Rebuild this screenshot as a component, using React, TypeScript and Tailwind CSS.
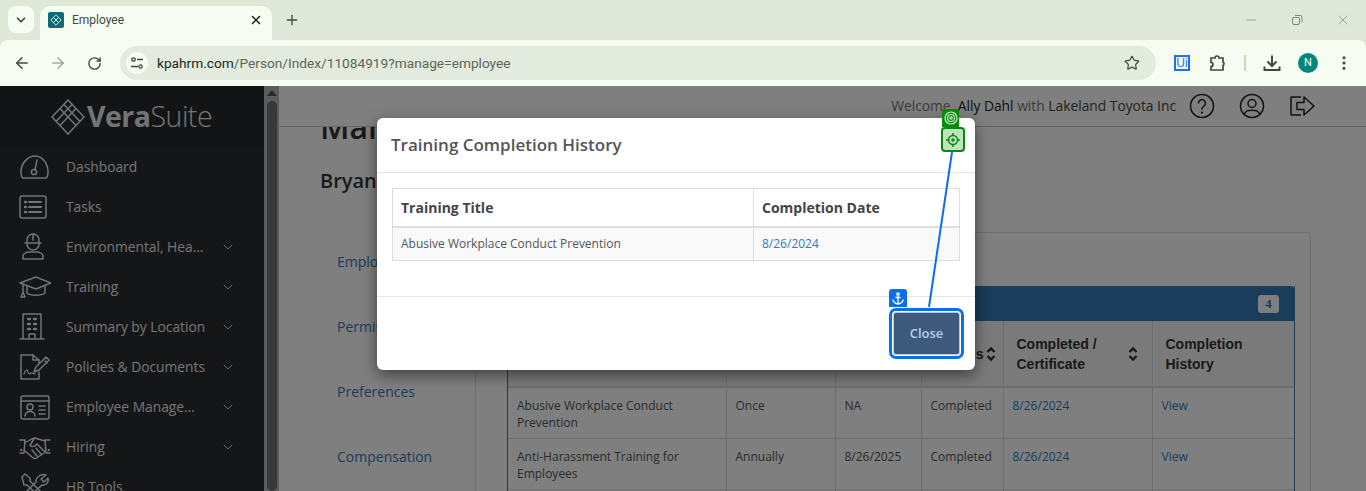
import { ArrowLeft, ArrowRight, ChevronDown, EllipsisVertical, Minus, Plus, RotateCw, Star, X } from "lucide-react";

const openSans = "font-['Open_Sans',sans-serif]";

const Icon = ({ children, dx = 0 }: { children: React.ReactNode; dx?: number }) => (
    <svg width={32} height={30} viewBox="0 0 32 30" fill="none" stroke="currentColor" strokeWidth="1.500" strokeLinecap="round" strokeLinejoin="round">
        <g transform={`translate(${dx} 0)`}>{children}</g>
    </svg>
);

const menu: { name: string; chevron?: boolean; icon: React.ReactNode }[] = [
    {
        name: "Dashboard",
        icon: (
            <Icon>
                <path d="M4 26h23c2-1 2-4 2-6C29 11 23 4 16 4S2 11 2 20c0 2 0 5 2 6z" />
                <circle cx="15" cy="20" r="2.600" />
                <path d="M16 17.500L18 8" />
            </Icon>
        ),
    },
    {
        name: "Tasks",
        icon: (
            <Icon dx={-2}>
                <rect x="3" y="4" width="26" height="22" rx="2" />
                <path d="M12 10h12M12 15h12M12 20h12" strokeWidth="2" />
                <path d="M8 10h1M8 15h1M8 20h1" strokeWidth="2.400" />
            </Icon>
        ),
    },
    {
        name: "Environmental, Health & Safety",
        chevron: true,
        icon: (
            <Icon dx={-2}>
                <path d="M10 11V8a6 6 0 0 1 12 0v3M8 11h16M16 2v6" />
                <path d="M10 12a6 6 0 0 0 12 0" />
                <path d="M6 27v-3c0-2 3-4 6-4h8c3 0 6 2 6 4v3z" />
            </Icon>
        ),
    },
    {
        name: "Training",
        chevron: true,
        icon: (
            <Icon>
                <path d="M1 11L17 5l15 6-15 6z" />
                <path d="M8 14v7c3 3 15 3 18 0v-7" />
                <path d="M4 12v8M2 25l2-5 2 5z" />
            </Icon>
        ),
    },
    {
        name: "Summary by Location",
        chevron: true,
        icon: (
            <Icon dx={-3}>
                <path d="M7 27V2h18v25M4 27h24M13 27v-5h6v5" />
                <path d="M12 7h2M18 7h2M12 12h2M18 12h2M12 17h2M18 17h2" strokeWidth="2.400" />
            </Icon>
        ),
    },
    {
        name: "Policies & Documents",
        chevron: true,
        icon: (
            <Icon>
                <path d="M20 20v7H2V3h12l6 5v3" />
                <path d="M14 3v5h6" />
                <path d="M5 22c2-5 3-5 4-2s2 2 3 1 2 1 4 1" strokeWidth="1.200" />
                <path d="M15 20l2-5L27 5l3 3-10 10zM26 9l2 2" />
            </Icon>
        ),
    },
    {
        name: "Employee Management",
        chevron: true,
        icon: (
            <Icon>
                <rect x="2" y="4" width="28" height="23" rx="2" />
                <path d="M2 9h28" />
                <circle cx="11" cy="15" r="3" />
                <path d="M6 24c0-6 10-6 10 0M20 14h6M20 18h6M20 22h6" />
            </Icon>
        ),
    },
    {
        name: "Hiring",
        chevron: true,
        icon: (
            <Icon>
                <path d="M1 8h5l-1 13H1M31 8h-5l1 13h4" />
                <path d="M2 18h.5M30 18h-.5" strokeWidth="2" />
                <path d="M6 10c4 0 6-4 10-4l10 3M15 7l-4 6c2 3 5 1 7-1l8 8" />
                <path d="M6 19l7 6c2 2 4 2 6 0l6-4M13 18l5 6M17 16l5 6" />
            </Icon>
        ),
    },
    {
        name: "HR Tools",
        icon: (
            <Icon>
                <path d="M3 5l3-3 5 4v3l13 13 4 4-3 3-17-16H5zM27 3l-5 4 3 3 4-4c1 4-2 8-6 7L12 23a3 3 0 1 1-4-4l9-9c-1-4 5-9 10-7z" />
            </Icon>
        ),
    },
];

const rows = [
    { title: "Abusive Workplace Conduct Prevention", freq: "Once", due: "NA", status: "Completed", date: "8/26/2024", link: "View" },
    { title: "Anti-Harassment Training for Employees", freq: "Annually", due: "8/26/2025", status: "Completed", date: "8/26/2024", link: "View" },
    { title: "", freq: "", due: "", status: "", date: "", link: "" },
];

const SortIcon = () => (
    <svg width="10" height="16" viewBox="0 0 10 16" fill="none" stroke="#333" strokeWidth="2.400" className="shrink-0">
        <path d="M1.500 6l3.500-3.500L8.500 6M1.500 10L5 13.500 8.500 10" />
    </svg>
);

function Chrome() {
    return (
        <div className="bg-[#dfe8d9] text-[#3f4a3c] font-['Roboto',sans-serif]">
            <div className="flex h-10 items-end pl-[8px]">
                <div className="mb-[7px] flex h-[27px] w-[26px] items-center justify-center rounded-[8px] bg-[#f7fcf3]">
                    <ChevronDown size={14} strokeWidth={3} />
                </div>
                <div className="ml-[6px] flex h-[34px] w-[232px] items-center rounded-t-[10px] bg-[#f7fcf3] pb-[6px] pl-[8px] pr-[9px]">
                    <div className="flex h-4 w-4 items-center justify-center rounded-[2px] bg-[#0f6b73]">
                        <svg width="12" height="12" viewBox="0 0 12 12" fill="none" stroke="#cfe8e8" strokeWidth="1">
                            <path d="M6 .8L11.200 6 6 11.200.8 6zM3.400 3.400l5.200 5.200M8.600 3.400L3.400 8.600" />
                        </svg>
                    </div>
                    <span className="ml-2 text-[12px]">Employee</span>
                    <X size={14} strokeWidth={2.600} className="ml-auto text-[#20261e]" />
                </div>
                <Plus size={16} strokeWidth={2} className="mb-[12px] ml-[12px]" />
                <div className="mb-[12px] ml-auto flex items-center gap-[30px] pr-[15px] text-[#7d867a]">
                    <Minus size={16} strokeWidth={1} />
                    <svg width="16" height="16" viewBox="0 0 16 16" fill="none" stroke="currentColor" strokeWidth="1">
                        <rect x="3.500" y="5.500" width="7" height="7" rx="1.500" />
                        <path d="M6 3.500h5.500a1.500 1.500 0 0 1 1.500 1.500v5.500" />
                    </svg>
                    <X size={16} strokeWidth={1} />
                </div>
            </div>
            <div className="flex h-[46px] items-center rounded-t-[8px] bg-[#f7fcf3] pl-[13px]">
                <ArrowLeft size={18} strokeWidth={2} />
                <ArrowRight size={18} strokeWidth={2} className="ml-[18px] text-[#a3a9a0]" />
                <RotateCw size={15} strokeWidth={2.200} className="ml-[20px]" />
                <div className="ml-[18px] flex h-[34px] w-[1036px] items-center rounded-full bg-[#e3ebde] pl-[6px] pr-[16px]">
                    <div className="flex h-[22px] w-[22px] items-center justify-center rounded-full bg-[#f7fcf3]">
                        <svg width="14" height="14" viewBox="0 0 14 14" fill="none" stroke="currentColor" strokeWidth="1.300">
                            <circle cx="3.500" cy="3.500" r="1.700" />
                            <circle cx="10.500" cy="10.500" r="1.700" />
                            <path d="M7 3.500h6M1 10.500h7" />
                        </svg>
                    </div>
                    <span className="ml-[9px] text-[13.700px] text-[#5d6659]">
                        <span className="text-[#20261e]">kpahrm.com</span>/Person/Index/11084919?manage=employee
                    </span>
                    <Star size={16} strokeWidth={1.800} className="ml-auto" />
                </div>
                <div className="ml-[18px] flex h-4 w-4 items-center justify-center border-2 border-[#1a73e8] font-['Liberation_Sans',sans-serif] text-[12px] leading-none text-[#1a73e8]">
                    Ui
                </div>
                <svg width="18" height="18" viewBox="0 0 18 18" fill="none" stroke="currentColor" strokeWidth="1.700" className="ml-[19px]">
                    <path d="M2 4h4a2 2 0 0 1 4 0h4v4a2 2 0 0 1 0 3.500V16H2v-3.500a2 2 0 0 0 0-4z" />
                </svg>
                <div className="ml-[17px] h-4 w-[2px] bg-[#b7e6a9]" />
                <svg width="18" height="18" viewBox="0 0 18 18" fill="none" stroke="currentColor" strokeWidth="2" className="ml-[17px]">
                    <path d="M9 1.500v10M4.500 7.500L9 12l4.500-4.500M1.500 12.500v3.500h15v-3.500" />
                </svg>
                <div className="ml-[17px] flex h-5 w-5 items-center justify-center rounded-full bg-[#00897b] text-[11px] text-white">N</div>
                <EllipsisVertical size={18} strokeWidth={2.200} className="ml-[17px]" />
            </div>
        </div>
    );
}

function Sidebar() {
    return (
        <aside className="flex h-full w-[264px] shrink-0 flex-col overflow-hidden bg-[#2b2d31] text-[#e8e8e8]">
            <div className="flex h-[61px] shrink-0 items-center bg-[#26282b] pl-[51px]">
                <svg width="34" height="36" viewBox="0 0 34 36" fill="none" stroke="currentColor" strokeWidth="1.500">
                    <path d="M17 1l16 17-16 17L1 18zM9 9.500l16 17M13 5.500l16 17M25 9.500l-16 17M21 5.500l-16 17" />
                </svg>
                <span className="ml-[2px] text-[28.500px] leading-none tracking-[-0.5px] font-['Open_Sans',sans-serif]">
                    <span className="font-bold">Vera</span>
                    <span className="font-light">Suite</span>
                </span>
            </div>
            {menu.map((item) => (
                <div key={item.name} className="flex h-10 shrink-0 items-center pl-[19px]">
                    <div className="w-[47px] shrink-0">{item.icon}</div>
                    <span className={`w-[140px] truncate text-[13.800px] ${openSans}`}>{item.name}</span>
                    {item.chevron && <ChevronDown size={16} strokeWidth={1.300} className="ml-[14px]" />}
                </div>
            ))}
        </aside>
    );
}

function Scrollbar() {
    return (
        <div className="flex h-full w-[15px] shrink-0 flex-col items-center bg-[#b8b8b8]">
            <div className="mt-[4px] h-0 w-0 border-x-[5px] border-b-[6px] border-x-transparent border-b-[#555]" />
            <div className="mt-[5px] h-full w-[10px] rounded-full bg-[#707070]" />
        </div>
    );
}

function TrainingTable() {
    return (
        <div className="ml-[31px] mr-[15px] mt-[53px] border border-t-0 border-[#337ab7]">
            <div className="flex h-[35px] items-center justify-end rounded-t-[3px] bg-[#337ab7] pr-[15px]">
                <span className="flex h-[18px] w-[21px] items-center justify-center rounded-[3px] bg-white font-['Liberation_Serif',serif] text-[13px] font-bold text-[#337ab7]">4</span>
            </div>
            <table className="w-full table-fixed border-collapse text-[12px] text-[#555]">
                <colgroup>
                    <col className="w-[218px]" />
                    <col className="w-[109px]" />
                    <col className="w-[86px]" />
                    <col className="w-[82px]" />
                    <col className="w-[149px]" />
                    <col />
                </colgroup>
                <thead>
                    <tr className="h-[66px] border-b-2 border-[#ddd] bg-[#f5f5f5] text-left font-['Liberation_Sans',sans-serif] text-[14px] font-bold leading-[20px] text-[#333]">
                        <th className="border-r border-[#ddd] px-[13px]">Training</th>
                        <th className="border-r border-[#ddd] px-[13px]">Frequency</th>
                        <th className="border-r border-[#ddd] px-[13px]">Due</th>
                        <th className="border-r border-[#ddd] pr-[7px] text-right">
                            <div className="flex items-center justify-end gap-[2px]">Status<SortIcon /></div>
                        </th>
                        <th className="border-r border-[#ddd] pl-[13px] pr-[14px]">
                            <div className="flex items-center justify-between">
                                <span>Completed /<br />Certificate</span>
                                <SortIcon />
                            </div>
                        </th>
                        <th className="px-[13px]">Completion<br />History</th>
                    </tr>
                </thead>
                <tbody className="leading-[17px]">
                    {rows.map((row, i) => (
                        <tr key={i} className="h-[51px] border-b border-[#ddd] align-top">
                            <td className="border-r border-[#ddd] px-[9px] pt-[9px]">{row.title}</td>
                            <td className="border-r border-[#ddd] px-[9px] pt-[9px]">{row.freq}</td>
                            <td className="border-r border-[#ddd] px-[9px] pt-[9px]">{row.due}</td>
                            <td className="border-r border-[#ddd] px-[9px] pt-[9px]">{row.status}</td>
                            <td className="border-r border-[#ddd] px-[9px] pt-[9px] text-[#337ab7]">{row.date}</td>
                            <td className="px-[9px] pt-[9px] text-[#337ab7]">{row.link}</td>
                        </tr>
                    ))}
                </tbody>
            </table>
        </div>
    );
}

function Main() {
    return (
        <main className={`flex h-full min-w-0 flex-1 flex-col bg-white ${openSans}`}>
            <header className="z-10 flex h-[41px] shrink-0 items-center justify-end border-b border-[#ccc] bg-white pr-[51px] text-[13.800px] text-[#777]">
                <span>Welcome, <span className="text-[#222]">Ally Dahl</span> with <span className="text-[#444]">Lakeland Toyota Inc</span></span>
                <svg width="26" height="26" viewBox="0 0 26 26" fill="none" stroke="#222" strokeWidth="1.500" strokeLinecap="round" className="ml-[13px]">
                    <circle cx="13" cy="13" r="11.500" />
                    <path d="M9.500 10a3.500 3.500 0 1 1 5.500 3c-1.500 1-2 1.500-2 3" />
                    <path d="M13 19.500v.2" strokeWidth="2.200" />
                </svg>
                <svg width="26" height="26" viewBox="0 0 26 26" fill="none" stroke="#222" strokeWidth="1.500" className="ml-[24px]">
                    <circle cx="13" cy="13" r="11.500" />
                    <circle cx="13" cy="10.500" r="4" />
                    <path d="M5.500 21c1-5 14-5 15 0" />
                </svg>
                <svg width="26" height="24" viewBox="0 0 26 24" fill="none" stroke="#222" strokeWidth="1.500" strokeLinejoin="round" className="ml-[24px]">
                    <path d="M12 3H2v18h10M8 8.500h7V3l10 9-10 9v-5.500H8z" />
                </svg>
            </header>
            <div className="min-h-0 flex-1 overflow-hidden pl-[41px]">
                <h1 className="mt-[-20px] whitespace-nowrap text-[32px] font-semibold leading-[40px] text-[#333]">Manage Employee</h1>
                <h2 className="mt-[21px] text-[20px] font-semibold leading-[26px] text-[#333]">Bryan Smith</h2>
                <div className="mt-[38px] flex">
                    <nav className="flex w-[155px] shrink-0 flex-col gap-[43px] pl-[17px] pt-[19px] text-[14px] leading-[22px] text-[#337ab7]">
                        <span>Employment</span>
                        <span>Permissions</span>
                        <span>Preferences</span>
                        <span>Compensation</span>
                    </nav>
                    <div className="mr-[55px] h-[400px] flex-1 rounded-[4px] border border-[#ddd]">
                        <TrainingTable />
                    </div>
                </div>
            </div>
        </main>
    );
}

function Modal() {
    return (
        <div className={`absolute left-[377px] top-[32px] h-[252px] w-[598px] rounded-[6px] bg-white shadow-[0_5px_15px_rgba(0,0,0,0.5)] ${openSans}`}>
            <div className="flex h-[55px] items-center border-b border-[#e5e5e5] pl-[14px] text-[17px] font-semibold text-[#555]">
                Training Completion History
            </div>
            <div className="px-[15px] pt-[15px]">
                <table className="w-[568px] table-fixed border-collapse border border-[#ddd] text-left">
                    <thead>
                        <tr className="h-[38px] border-b-2 border-[#ddd] text-[14px] font-bold text-[#444]">
                            <th className="w-[361px] border-r border-[#ddd] px-[8px]">Training Title</th>
                            <th className="px-[8px]">Completion Date</th>
                        </tr>
                    </thead>
                    <tbody>
                        <tr className="h-[34px] bg-[#f9f9f9] text-[12px] text-[#555]">
                            <td className="border-r border-[#ddd] px-[8px]">Abusive Workplace Conduct Prevention</td>
                            <td className="px-[8px] text-[#337ab7]">8/26/2024</td>
                        </tr>
                    </tbody>
                </table>
            </div>
            <div className="mt-[35px] flex justify-end border-t border-[#e5e5e5] pr-[15px] pt-[15px]">
                <button className="flex h-[43px] w-[67px] items-center justify-center rounded-[3px] border border-[#b7c9dc] bg-[#3d5a7c] text-[13px] font-semibold text-[#b4cfee] outline-[3px] outline-offset-[1px] outline-[#0b6fe8]">
                    Close
                </button>
            </div>
        </div>
    );
}

// recorder markers that sit on top of the dialog
function Markers() {
    return (
        <>
            <svg width="1366" height="404" className="pointer-events-none absolute left-0 top-0">
                <path d="M952 66L929 221" stroke="#0b6fe8" strokeWidth="2" fill="none" />
            </svg>
            <div className="absolute left-[942px] top-[23px] flex h-[18px] w-[17px] items-center justify-center rounded-t-[2px] bg-[#0a8a0a]">
                <svg width="14" height="14" viewBox="0 0 14 14" fill="none" stroke="#cdeccd" strokeWidth="1.200">
                    <circle cx="7" cy="7" r="6" />
                    <circle cx="7" cy="7" r="3.500" />
                    <circle cx="7" cy="7" r="1.200" />
                </svg>
            </div>
            <div className="absolute left-[941px] top-[41px] flex h-[25px] w-[24px] items-center justify-center rounded-[4px] border-2 border-[#0a8a0a] bg-[#bfe3bf]">
                <svg width="16" height="16" viewBox="0 0 16 16" fill="none" stroke="#0a8a0a" strokeWidth="1.500">
                    <circle cx="8" cy="8" r="4.500" />
                    <circle cx="8" cy="8" r="1" />
                    <path d="M8 1v2.500M8 12.500V15M1 8h2.500M12.500 8H15" />
                </svg>
            </div>
            <div className="absolute left-[889px] top-[203px] flex h-[18px] w-[18px] items-center justify-center rounded-t-[3px] bg-[#0b6fe8]">
                <svg width="12" height="13" viewBox="0 0 12 13" fill="none" stroke="white" strokeWidth="1.300">
                    <circle cx="6" cy="2" r="1.200" />
                    <path d="M6 3.500V12M3.500 5.500h5M1 7.500c0 2.500 2.500 4 5 4.500 2.500-.5 5-2 5-4.500" />
                </svg>
            </div>
        </>
    );
}

export default function App() {
    return (
        <div className="relative h-[491px] w-[1366px] overflow-hidden bg-white">
            <Chrome />
            <div className="relative flex h-[405px]">
                <Sidebar />
                <Scrollbar />
                <Main />
                <div className="absolute inset-0 z-20 bg-black/50" />
                <div className="absolute inset-0 z-30">
                    <Modal />
                    <Markers />
                </div>
            </div>
        </div>
    );
}
